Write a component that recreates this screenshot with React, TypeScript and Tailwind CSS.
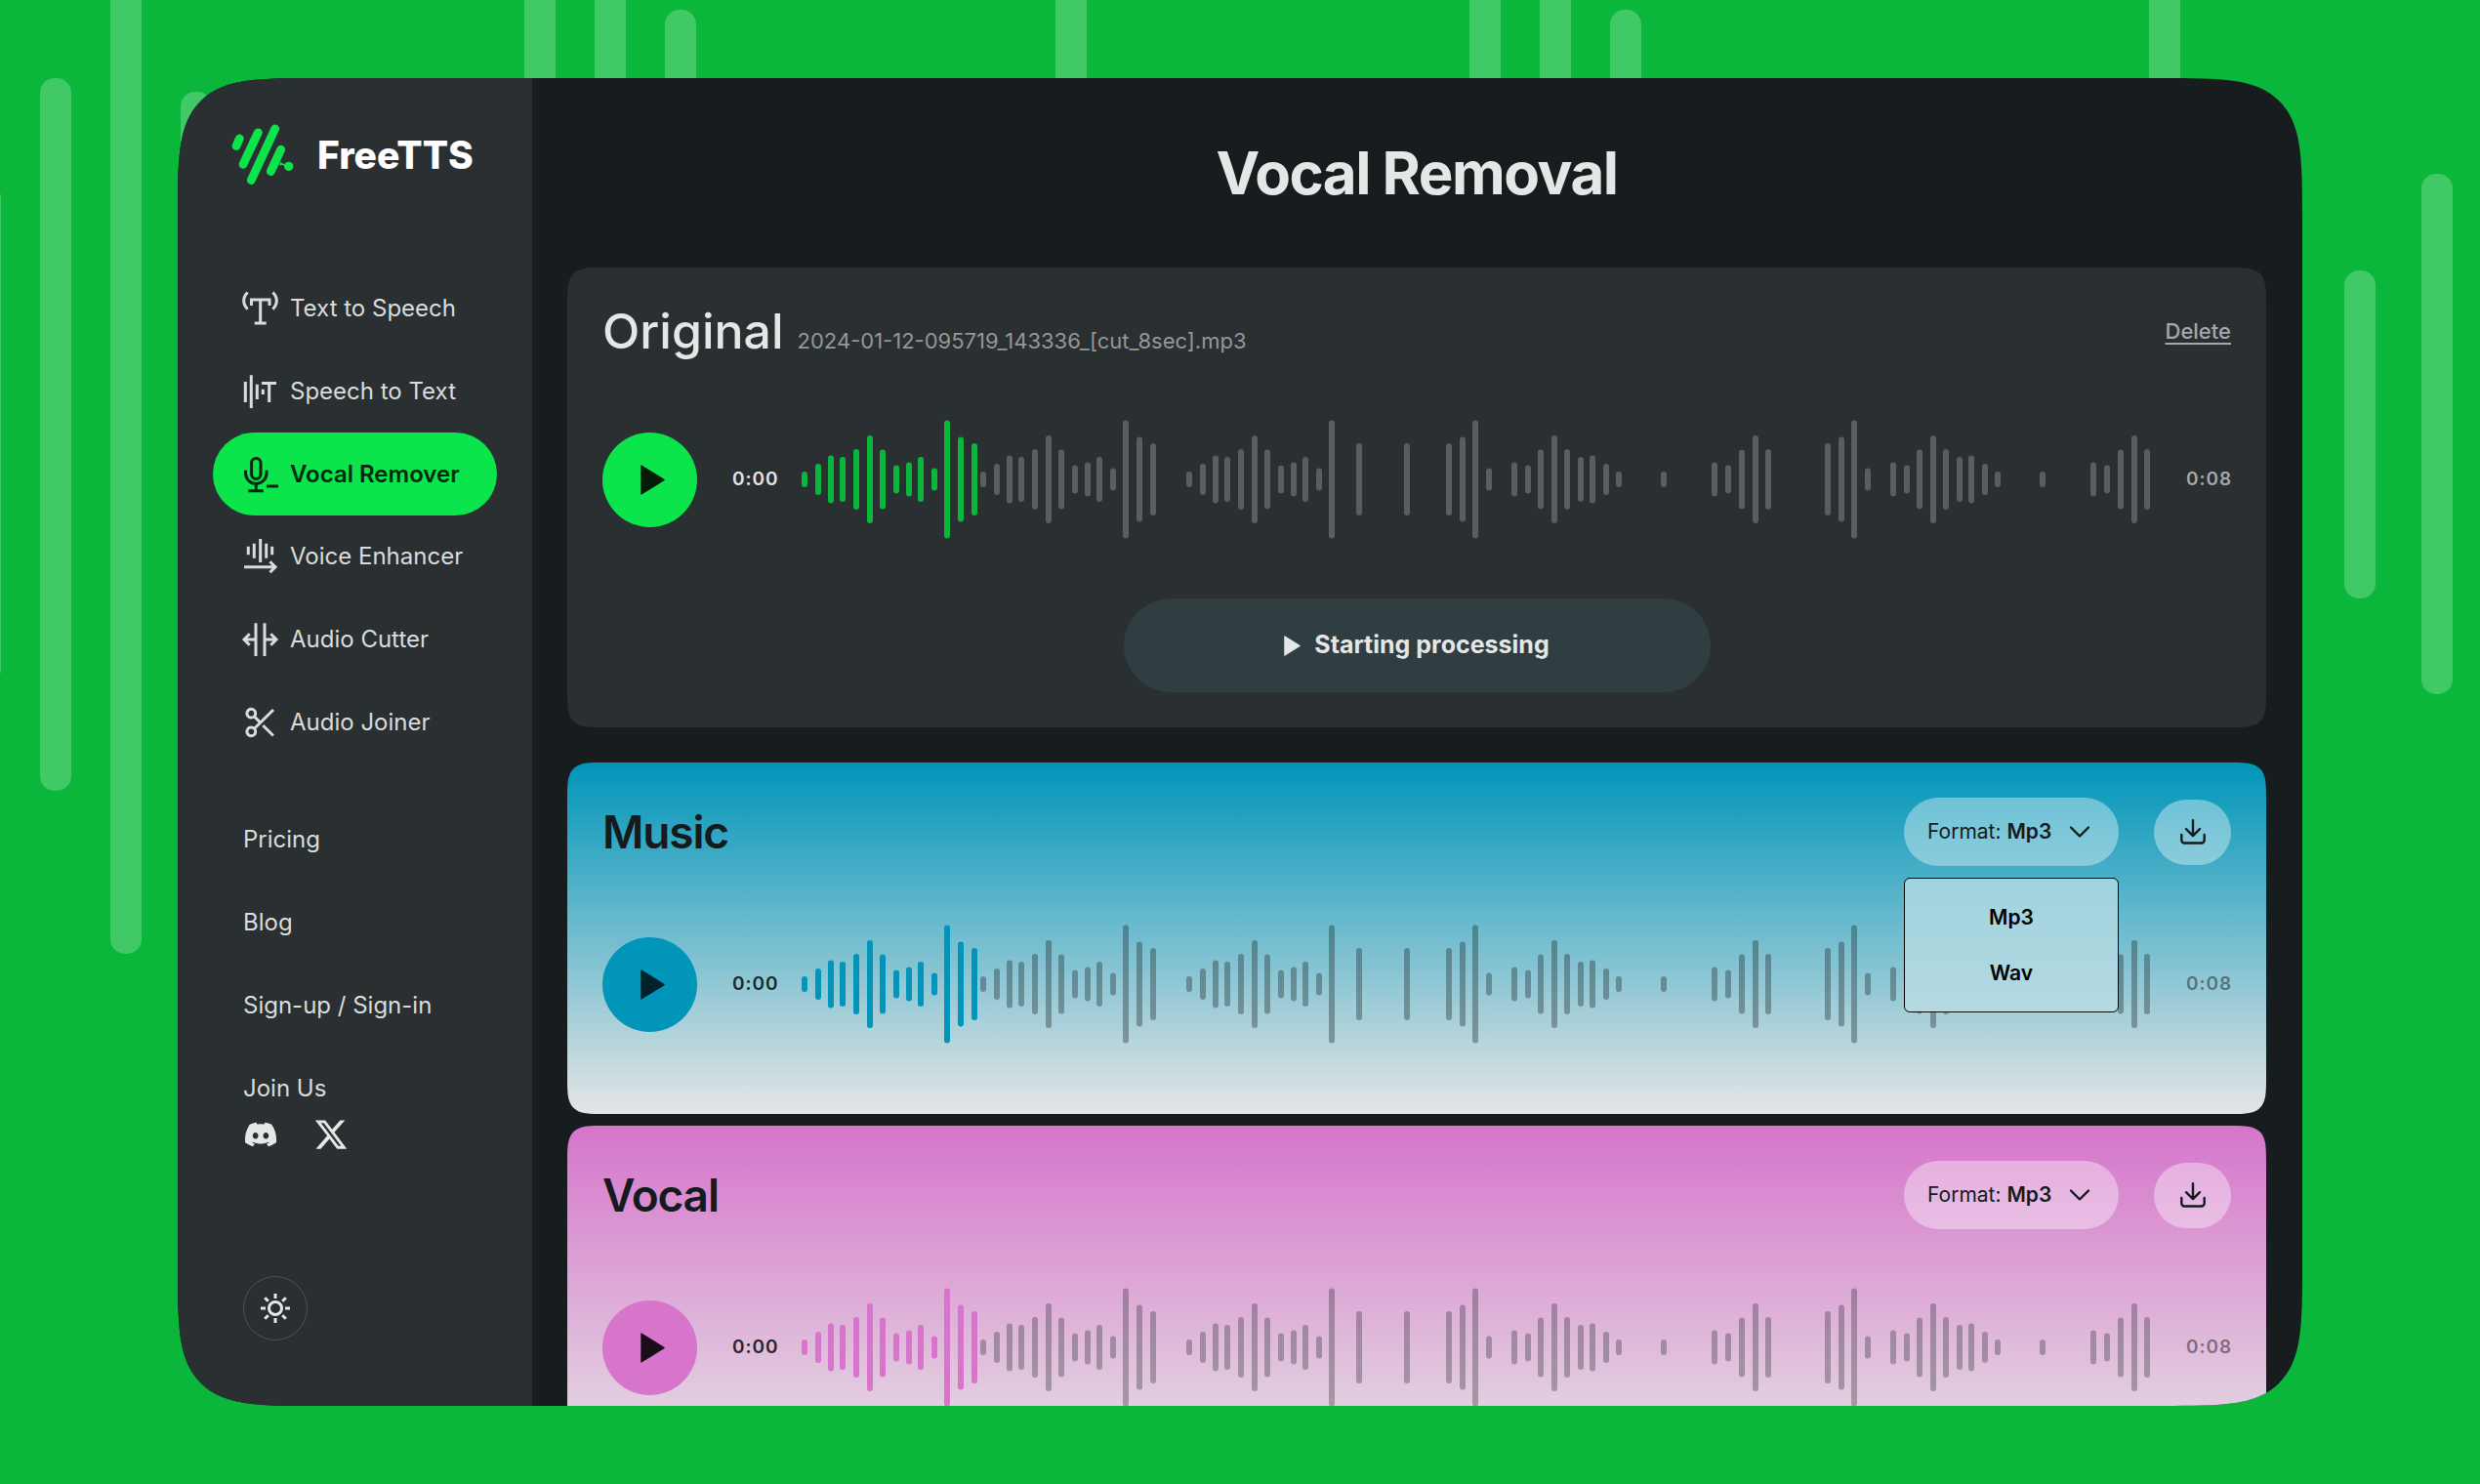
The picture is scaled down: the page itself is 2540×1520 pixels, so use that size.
import type { ReactNode } from "react";
import { ChevronDown } from "lucide-react";
import { FaDiscord, FaXTwitter } from "react-icons/fa6";

/* ---------- icons ---------- */

function StrokeIcon({ children }: { children: ReactNode }) {
  return (
    <svg
      viewBox="0 0 36 36"
      className="size-9 shrink-0 overflow-visible"
      fill="none"
      stroke="currentColor"
      strokeWidth={3}
      aria-hidden="true"
    >
      {children}
    </svg>
  );
}

const TextToSpeechIcon = () => (
  <StrokeIcon>
    <path d="M9.500 15V9H28v6M18.700 9v24M12.700 33h12" />
    <path d="M5.600 1.500C.4 6.600.4 13.600 5.600 18.700M31.400 1.500c5.200 5.100 5.200 12.100 0 17.200" />
  </StrokeIcon>
);

const SpeechToTextIcon = () => (
  <StrokeIcon>
    <path d="M3.300 8v21M9.300 1.300V35M15.300 10.700V26M21.300 15.700v5.300M20 9.500h15M27.700 9.500V29" />
  </StrokeIcon>
);

const MicIcon = () => (
  <StrokeIcon>
    <rect x="9.600" y="1.500" width="9.400" height="21" rx="4.700" />
    <path d="M3.500 13.700v3a10.750 10.750 0 0 0 21.500 0v-3M14.300 27.500v7M6.300 34.700h15.400M25 30h12" />
  </StrokeIcon>
);

const EnhancerIcon = () => (
  <StrokeIcon>
    <path d="M6.300 7.700v8.600M12.300 4.700v15M18.700 0v24M24.700 4.700v15M30.700 7.700v8.600" />
    <path d="M2 28.700h32M28.500 23.300l5.500 5.400-5.500 5.500" />
  </StrokeIcon>
);

const CutterIcon = () => (
  <StrokeIcon>
    <path d="M14 1.300V35M23 1.300V35M14 18H2M7.700 12.300L2 18l5.700 5.700M23 18h12M29.300 12.300L35 18l-5.700 5.700" />
  </StrokeIcon>
);

const ScissorsIcon = () => (
  <StrokeIcon>
    <circle cx="9.300" cy="8.700" r="4.400" />
    <circle cx="9.300" cy="27.300" r="4.400" />
    <path d="M32 5L12.500 24.200M12.500 11.900L18.500 18M21.300 21L31.900 31.500" />
  </StrokeIcon>
);

const SunIcon = () => (
  <StrokeIcon>
    <circle cx="18" cy="18" r="6.500" />
    <path d="M18 3v5M18 28v5M3 18h5M28 18h5M7.200 7.200l3.600 3.600M25.200 25.200l3.600 3.600M7.200 28.800l3.600-3.600M25.200 10.800l3.600-3.600" />
  </StrokeIcon>
);

const DownloadIcon = () => (
  <svg
    viewBox="0 0 26 26"
    className="size-[26px]"
    fill="none"
    stroke="currentColor"
    strokeWidth={2.4}
    strokeLinecap="round"
    strokeLinejoin="round"
    aria-hidden="true"
  >
    <path d="M1.300 16v5.500a3 3 0 0 0 3 3h17.400a3 3 0 0 0 3-3V16M13 1.200V17M6 10.200l7 7 7-7" />
  </svg>
);

function PlayTriangle({ className }: { className: string }) {
  return (
    <svg viewBox="0 0 25 31" className={className} fill="currentColor" aria-hidden="true">
      <path d="M.3.900Q.4.100 1.200.4L24.300 14.800q.9.700 0 1.400L1.200 30.600q-.8.300-.9-.5z" />
    </svg>
  );
}

const LogoMark = () => (
  <svg
    viewBox="0 0 64 63"
    className="h-[63px] w-16 shrink-0 text-[#0be54b]"
    fill="none"
    stroke="currentColor"
    strokeWidth={8.8}
    strokeLinecap="round"
    aria-hidden="true"
  >
    <path d="M8.300 15L5 22.500M27.300 8.800L12 41.300M44.700 5L20.300 57.500M50.700 26.200L40.300 48.600" />
    <circle cx="58.700" cy="43.400" r="4.700" fill="currentColor" stroke="none" />
    <path d="M50 38.500c3 3 5 3 7 1l-1 5c-2-3-5-3-7-2z" fill="currentColor" stroke="none" />
  </svg>
);

/* ---------- background ---------- */

const backdropBars = [
  [-31, 188, 512],
  [41, 80, 730],
  [113, -60, 1037],
  [185, 94, 500],
  [537, -60, 300],
  [609, -60, 300],
  [681, 10, 300],
  [1081, -60, 300],
  [1505, -60, 300],
  [1577, -60, 300],
  [1649, 10, 300],
  [2201, -60, 300],
  [2401, 277, 336],
  [2480, 178, 533],
];

function Backdrop() {
  return (
    <svg
      viewBox="0 0 2540 1520"
      preserveAspectRatio="xMidYMid slice"
      className="absolute inset-0 size-full text-[#42c967]"
      fill="currentColor"
      aria-hidden="true"
    >
      {backdropBars.map(([x, y, height]) => (
        <rect key={x} x={x} y={y} width={32} height={height} rx={15} />
      ))}
    </svg>
  );
}

/* ---------- waveform ---------- */

const riseHeights = [16, 32, 49, 46, 62, 90, 61, 29, 35, 46, 23, 121, 87, 74];
const playedX = [3, 17, 30, 42, 56, 70, 83, 97, 110, 122, 136, 149, 163, 177];

const played = playedX.map((x, i) => [x, riseHeights[i]]);

const remaining = [
  ...playedX.map((x, i) => [x + 183, riseHeights[i]]),
  ...playedX.slice(0, 12).map((x, i) => [x + 394, riseHeights[i]]),
  [571, 74],
  [620, 74],
  ...[0, 388].flatMap((offset) => [
    [663 + offset, 74],
    [677 + offset, 87],
    [690 + offset, 121],
    [704 + offset, 23],
    [730 + offset, 35],
    [744 + offset, 29],
    [757 + offset, 61],
    [771 + offset, 90],
    [784 + offset, 62],
    [798 + offset, 46],
    [810 + offset, 49],
    [824 + offset, 32],
    [837 + offset, 16],
    [883 + offset, 16],
    [935 + offset, 35],
    [949 + offset, 29],
    [963 + offset, 61],
    [977 + offset, 90],
    [990 + offset, 62],
  ]),
];

function Bars({ bars, className }: { bars: number[][]; className: string }) {
  return (
    <g className={className}>
      {bars.map(([x, height]) => (
        <rect key={x} x={x - 3} y={61 - height / 2} width={6} height={height} rx={3} />
      ))}
    </g>
  );
}

type Tone = {
  button: string;
  played: string;
  rest: string;
  current: string;
  total: string;
};

const originalTone: Tone = {
  button: "bg-[#0be54b] text-[#021c09]",
  played: "fill-[#0ab63c]",
  rest: "fill-[#5a5e5f]",
  current: "text-[#e3e4e4]",
  total: "text-[#a5a7a8]",
};
const musicTone: Tone = {
  button: "bg-[#0095b9] text-[#00222a]",
  played: "fill-[#0095b9]",
  rest: "fill-[#171c1f]/35",
  current: "text-[#1c2a2e]",
  total: "text-[#171c1f]/50",
};
const vocalTone: Tone = {
  button: "bg-[#d675cb] text-[#1a0d18]",
  played: "fill-[#d675cb]",
  rest: "fill-[#171c1f]/30",
  current: "text-[#2c232c]",
  total: "text-[#171c1f]/50",
};

function Player({ tone, name }: { tone: Tone; name: string }) {
  return (
    <div className="flex items-center">
      <button
        type="button"
        aria-label={`Play ${name}`}
        className={`flex size-[97px] shrink-0 items-center justify-center rounded-full ${tone.button}`}
      >
        <PlayTriangle className="ml-1.5 h-[31px] w-[25px]" />
      </button>
      <span className={`ml-9 w-[71px] shrink-0 text-[19px] leading-6 font-semibold tracking-wider ${tone.current}`}>
        0:00
      </span>
      <svg viewBox="0 0 1382 122" className="min-w-0 flex-1" role="img" aria-label={`${name} waveform`}>
        <Bars bars={played} className={tone.played} />
        <Bars bars={remaining} className={tone.rest} />
      </svg>
      <span
        className={`ml-9 w-[46px] shrink-0 text-[19px] leading-6 font-semibold tracking-wider whitespace-nowrap ${tone.total}`}
      >
        0:08
      </span>
    </div>
  );
}

/* ---------- sidebar ---------- */

const tools = [
  { label: "Text to Speech", icon: <TextToSpeechIcon /> },
  { label: "Speech to Text", icon: <SpeechToTextIcon /> },
  { label: "Vocal Remover", icon: <MicIcon />, active: true },
  { label: "Voice Enhancer", icon: <EnhancerIcon /> },
  { label: "Audio Cutter", icon: <CutterIcon /> },
  { label: "Audio Joiner", icon: <ScissorsIcon /> },
];

const pages = ["Pricing", "Blog", "Sign-up / Sign-in"];

function Sidebar() {
  return (
    <aside className="flex w-[363px] shrink-0 flex-col bg-[#2a2f32] px-9 pt-[47px] text-2xl text-[#dadcdc]">
      <a href="#" className="ml-[19px] flex items-center gap-6 text-[39px] leading-none font-extrabold text-white">
        <LogoMark />
        FreeTTS
      </a>

      <nav aria-label="Tools" className="mt-[84px] grid h-[508px] auto-rows-fr">
        {tools.map(({ label, icon, active }) => (
          <a
            key={label}
            href="#"
            aria-current={active ? "page" : undefined}
            className={
              active
                ? "flex items-center gap-[13px] rounded-full bg-[#0be54b] pl-[30px] font-semibold whitespace-nowrap text-[#03260e]"
                : "flex items-center gap-[13px] pl-[30px] whitespace-nowrap"
            }
          >
            {icon}
            {label}
          </a>
        ))}
      </nav>

      <nav aria-label="Pages" className="mt-9 grid h-[254px] auto-rows-fr pl-[31px]">
        {pages.map((label) => (
          <a key={label} href="#" className="flex items-center whitespace-nowrap">
            {label}
          </a>
        ))}
      </nav>

      <div className="mt-[25px] pl-[31px]">
        <p className="leading-9">Join Us</p>
        <div className="mt-3.5 flex h-[30px] items-center gap-9 text-[#e6e7e7]">
          <a href="#" aria-label="Discord">
            <FaDiscord className="h-7 w-9" />
          </a>
          <a href="#" aria-label="X">
            <FaXTwitter className="size-9" />
          </a>
        </div>
      </div>

      <button
        type="button"
        aria-label="Light theme"
        className="mt-[130px] ml-[31px] flex size-[66px] items-center justify-center rounded-full border border-[#4d5557] text-[#e6e7e7]"
      >
        <SunIcon />
      </button>
    </aside>
  );
}

/* ---------- cards ---------- */

function Stem({
  name,
  tone,
  gradient,
  menuOpen = false,
}: {
  name: string;
  tone: Tone;
  gradient: string;
  menuOpen?: boolean;
}) {
  const id = `${name.toLowerCase()}-format`;
  return (
    <section
      className={`shrink-0 rounded-[22px] px-9 pt-9 pb-[72px] [corner-shape:squircle] supports-[corner-shape:squircle]:rounded-[40px] ${gradient}`}
    >
      <div className="flex h-[70px] items-center text-[#141a1d]">
        <h2 className="text-[46px] font-semibold tracking-tight">{name}</h2>
        <div className="relative ml-auto">
          <div className="flex h-[70px] w-[220px] items-center rounded-full bg-white/38 pr-[22px] pl-6 text-[21px]">
            <label htmlFor={id} className="whitespace-nowrap">
              Format:
            </label>
            <select id={id} defaultValue="Mp3" className="ml-1.5 min-w-0 flex-1 appearance-none bg-transparent font-semibold">
              <option>Mp3</option>
              <option>Wav</option>
            </select>
            <ChevronDown className="size-9 shrink-0" strokeWidth={1.6} aria-hidden="true" />
          </div>
          {menuOpen && (
            <ul
              role="listbox"
              aria-label="Format options"
              className="absolute top-full right-0 left-0 mt-3 rounded-md border border-black bg-linear-to-b from-[#9fd3df] to-[#b5d9e1] py-[11px] text-center text-[21px] font-semibold text-black"
            >
              <li role="option" aria-selected="true" className="leading-[57px]">
                Mp3
              </li>
              <li role="option" aria-selected="false" className="leading-[57px]">
                Wav
              </li>
            </ul>
          )}
        </div>
        <button
          type="button"
          aria-label={`Download ${name}`}
          className="ml-9 flex h-[67px] w-[79px] items-center justify-center rounded-full bg-white/38"
        >
          <DownloadIcon />
        </button>
      </div>
      <div className="mt-[60px]">
        <Player tone={tone} name={name} />
      </div>
    </section>
  );
}

export default function App() {
  return (
    <div className="relative h-screen bg-[#0ab73b] px-[182px] py-20 font-[Inter,sans-serif]">
      <Backdrop />
      <div className="relative flex h-full overflow-hidden rounded-[80px] bg-[#171c1f] [corner-shape:squircle] supports-[corner-shape:squircle]:rounded-[148px]">
        <Sidebar />
        <main className="flex min-w-0 flex-1 flex-col pr-[37px] pl-9">
          <h1 className="flex h-[194px] shrink-0 items-center justify-center text-[60px] font-bold tracking-tight text-[#e5e6e6]">
            Vocal Removal
          </h1>

          <section className="flex shrink-0 flex-col gap-[61px] rounded-[22px] bg-[#2a2f32] px-9 pt-9 pb-9 [corner-shape:squircle] supports-[corner-shape:squircle]:rounded-[40px]">
            <div className="flex h-[59px] items-center justify-between">
              <div className="flex items-baseline gap-3.5">
                <h2 className="text-[50px] font-medium text-[#e5e6e6]">Original</h2>
                <p className="text-[22px] text-[#949799]">2024-01-12-095719_143336_[cut_8sec].mp3</p>
              </div>
              <a href="#" className="text-[22px] font-medium text-[#a5a7a8] underline underline-offset-4">
                Delete
              </a>
            </div>
            <Player tone={originalTone} name="Original" />
            <button
              type="button"
              className="flex h-[96px] w-[601px] items-center justify-center gap-3.5 self-center rounded-full bg-[#303d41] text-[25px] font-bold text-[#e5e6e6]"
            >
              <PlayTriangle className="h-[21px] w-[17px]" />
              Starting processing
            </button>
          </section>

          <div className="mt-9 flex flex-col gap-3">
            <Stem name="Music" tone={musicTone} gradient="bg-linear-to-b/srgb from-[#0095b9] to-[#e5e5e5]" menuOpen />
            <Stem name="Vocal" tone={vocalTone} gradient="bg-linear-to-b/srgb from-[#d675cb] to-[#e5e5e5]" />
          </div>
        </main>
      </div>
    </div>
  );
}
